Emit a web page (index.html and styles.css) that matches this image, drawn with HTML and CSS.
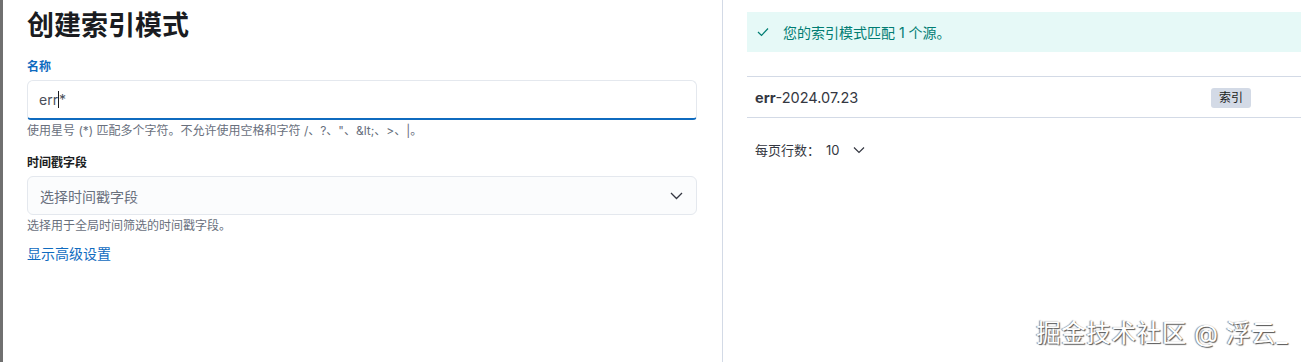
FILE: index.html
```html
<!DOCTYPE html>
<html lang="zh-CN">
  <head>
    <meta charset="UTF-8" />
    <meta name="viewport" content="width=device-width, initial-scale=1.0" />
    <title>创建索引模式</title>
    <link rel="stylesheet" href="styles.css">
  </head>
  <body>
    <div class="page">
      <div class="form-panel">
        <h1 class="title">创建索引模式</h1>

        <div class="field">
          <label class="field-label active">名称</label>
          <div class="text-input">err<span class="caret"></span>*</div>
          <div class="help">使用星号 (*) 匹配多个字符。不允许使用空格和字符 /、?、"、&amp;lt;、&gt;、|。</div>
        </div>

        <div class="field">
          <label class="field-label">时间戳字段</label>
          <div class="select-input">
            <span class="placeholder">选择时间戳字段</span>
            <svg class="chevron" width="13" height="8" viewBox="0 0 13 8">
              <path d="M1 1 L6.5 6.5 L12 1" fill="none" stroke="#343741" stroke-width="1.3" />
            </svg>
          </div>
          <div class="help">选择用于全局时间筛选的时间戳字段。</div>
        </div>

        <a class="advanced-link" href="#">显示高级设置</a>
      </div>

      <div class="preview-panel">
        <div class="callout">
          <svg class="check" width="12" height="10" viewBox="0 0 12 10">
            <path d="M1 5 L4.5 8.5 L11 1.5" fill="none" stroke="#017d73" stroke-width="1.2" />
          </svg>
          <span>您的索引模式匹配 1 个源。</span>
        </div>

        <div class="table">
          <div class="table-row">
            <div class="cell-name"><strong>err</strong>-2024.07.23</div>
            <div class="cell-tag"><span class="badge">索引</span></div>
          </div>
        </div>

        <div class="pager">
          <span>每页行数：</span>
          <span class="pager-value">10</span>
          <svg width="12" height="8" viewBox="0 0 12 8">
            <path d="M1 1.5 L6 6.5 L11 1.5" fill="none" stroke="#343741" stroke-width="1.2" />
          </svg>
        </div>
      </div>
    </div>

    <div class="watermark">掘金技术社区 @ 浮云_</div>
  </body>
</html>
```

FILE: styles.css
```css
body {
  margin: 0;
  font-family: Inter, "Noto Sans CJK SC", sans-serif;
  color: #343741;
  background-color: #fff;
  overflow: hidden;
}

.page {
  display: flex;
  height: 362px;
  border-left: 3px solid #707070;
}

.form-panel {
  width: 670px;
  padding: 8px 25px 0 24px;
  border-right: 1px solid #d3dae6;
}

.title {
  margin: 0;
  font-size: 27px;
  line-height: 36px;
  font-weight: 700;
  color: #1a1c21;
}

.field {
  margin-top: 14px;
}

.field + .field {
  margin-top: 15px;
}

.field-label {
  display: block;
  font-size: 12px;
  line-height: 18px;
  font-weight: 700;
  color: #1a1c21;
  margin-bottom: 4px;
}

.field-label.active {
  color: #0f6bbf;
}

.text-input {
  box-sizing: border-box;
  height: 40px;
  padding: 0 11px;
  display: flex;
  align-items: center;
  font-size: 14px;
  color: #4a4f5a;
  background-color: #fff;
  border: 1px solid #e4e8ee;
  border-bottom: 2px solid #0f6bbf;
  border-radius: 6px 6px 4px 4px;
}

.caret {
  display: inline-block;
  width: 1px;
  height: 17px;
  background-color: #1a1c21;
}

.select-input {
  box-sizing: border-box;
  height: 39px;
  padding: 0 12px;
  display: flex;
  align-items: center;
  justify-content: space-between;
  background-color: #fbfcfd;
  border: 1px solid #e4e8ee;
  border-radius: 6px;
}

.placeholder {
  font-size: 14px;
  color: #69707d;
}

.chevron {
  margin-right: 1px;
}

.help {
  margin-top: 3px;
  font-size: 12px;
  line-height: 16px;
  color: #69707d;
}

.advanced-link {
  display: inline-block;
  margin-top: 10px;
  font-size: 14px;
  line-height: 20px;
  color: #0f6bbf;
  text-decoration: none;
}

.preview-panel {
  flex: 1;
  padding: 12px 0 0 24px;
}

.callout {
  height: 40px;
  display: flex;
  align-items: center;
  padding-left: 10px;
  background-color: #e6f9f7;
  font-size: 14px;
  color: #017d73;
}

.check {
  margin-right: 14px;
}

.table {
  margin-top: 24px;
  border-top: 1px solid #d3dae6;
  border-bottom: 1px solid #d3dae6;
}

.table-row {
  height: 40px;
  display: flex;
  align-items: center;
}

.cell-name {
  width: 456px;
  padding-left: 8px;
  font-size: 14.5px;
  color: #343741;
}

.badge {
  display: inline-block;
  padding: 0 8px;
  height: 20px;
  line-height: 20px;
  font-size: 12px;
  color: #1a1c21;
  background-color: #d3dae6;
  border-radius: 3px;
}

.pager {
  margin-top: 22px;
  padding-left: 8px;
  display: flex;
  align-items: center;
  font-size: 13px;
  color: #343741;
}

.pager-value {
  margin-left: 6px;
  margin-right: 13px;
}

.watermark {
  position: absolute;
  right: 13px;
  bottom: 14px;
  font-size: 24.5px;
  line-height: 30px;
  color: #fff;
  text-shadow: 1px 1px 1px #555, -1px 0 1px #888;
  letter-spacing: 0.6px;
}
```
